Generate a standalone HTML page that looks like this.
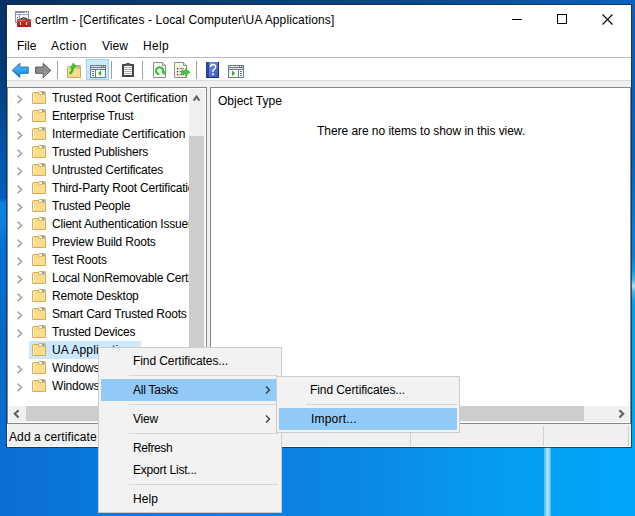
<!DOCTYPE html>
<html><head><meta charset="utf-8">
<style>
*{margin:0;padding:0;box-sizing:border-box}
html,body{width:635px;height:516px;overflow:hidden}
body{position:relative;font-family:"Liberation Sans",sans-serif;font-size:12px;color:#000;background:#0a6cd0}
.a{position:absolute}
.t{position:absolute;white-space:pre;line-height:14px;height:14px}
#desk{left:0;top:0;width:635px;height:516px;background:#0a6ed2}
#dtop{left:0;top:0;width:635px;height:6px;background:linear-gradient(90deg,#0a3062 0px,#083a70 160px,#08447f 320px,#0a4f98 475px,#0a62c0 635px)}
#dleft{left:0;top:0;width:8px;height:450px;background:linear-gradient(180deg,#0a3062 0px,#003a78 67px,#0058b0 157px,#005eba 198px,#0a84e2 203px,#0a80de 225px,#0070d2 245px,#006ed0 290px,#0068c8 337px,#0a6ed2 450px)}
#dright{left:630px;top:0;width:5px;height:450px;background:linear-gradient(180deg,#0a60c0 0px,#0062c0 67px,#0066c8 157px,#0080e6 237px,#0a7ed8 255px,#069cf0 270px,#40b8f4 280px,#a8e0f8 286px,#40b8f4 292px,#00a0f4 302px,#00a4f8 337px,#00a6fa 450px)}
#dbot{left:0;top:445px;width:635px;height:71px;background:linear-gradient(90deg,#0a6ed2 0px,#0a78dc 95px,#0a82e2 285px,#0a8ae8 380px,#0896ee 450px,#04a0f4 540px,#00a6fa 635px)}
#beam{left:544px;top:440px;width:7px;height:76px;background:linear-gradient(90deg,rgba(110,205,255,.55),rgba(200,240,255,.95) 55%,rgba(110,205,255,.5))}
#win{left:6px;top:4px;width:626px;height:444px;border:1px solid rgba(40,40,40,.75);background:#fff;background-clip:padding-box}
.row{position:absolute;left:-1px;width:190px;height:18px;overflow:hidden}
.row .tx{position:absolute;left:45px;top:0;line-height:18px;white-space:pre;letter-spacing:-0.2px}
.row .chev{position:absolute;left:9px;top:5px}
.row .fold{position:absolute;left:25px;top:2px}
.sep{position:absolute;height:1px;background:#d7d7d7}
.mi{position:absolute;white-space:pre;line-height:22px;height:22px;letter-spacing:-0.22px}
.row .hl{position:absolute;left:22px;top:0;width:112px;height:18px;background:#cce8ff}
</style></head><body>
<div class="a" id="desk"></div><div class="a" id="dtop"></div><div class="a" id="dleft"></div><div class="a" id="dright"></div><div class="a" id="dbot"></div><div class="a" id="beam"></div>
<div class="a" id="win"></div>

<!-- title icon -->
<svg class="a" style="left:15px;top:11px" width="16" height="16" viewBox="0 0 16 16">
<defs><linearGradient id="rb" x1="0" y1="0" x2="0" y2="1"><stop offset="0" stop-color="#e23434"/><stop offset="1" stop-color="#b81818"/></linearGradient></defs>
<rect x="0.5" y="0.5" width="13" height="11" fill="#fafbfc" stroke="#8a94a4"/>
<rect x="1" y="1" width="9" height="1" fill="#7d8aa6"/><rect x="11" y="1" width="1" height="1" fill="#7d8aa6"/><rect x="13" y="1" width="0" height="1" fill="#7d8aa6"/>
<rect x="1" y="3" width="12" height="1" fill="#9ba6b8"/>
<rect x="4" y="4" width="1" height="7" fill="#8a94a4"/>
<rect x="2" y="6" width="1" height="1" fill="#555"/>
<path d="M5.5 8.5Q8.8 5.2 12.3 8.5" fill="none" stroke="#1e1e1e" stroke-width="1.2"/>
<rect x="2" y="8" width="14" height="8" rx="0.8" fill="url(#rb)"/>
<rect x="3" y="9" width="7" height="1" fill="#ee7070"/>
<rect x="5" y="11" width="1" height="3" fill="#d6e2e2"/><rect x="11" y="11" width="1" height="3" fill="#d6e2e2"/>
</svg>
<div class="t" style="left:35px;top:13px;letter-spacing:0.13px">certlm - [Certificates - Local Computer\UA Applications]</div>

<!-- caption buttons -->
<div class="a" style="left:512px;top:19px;width:10px;height:1px;background:#000"></div>
<div class="a" style="left:557px;top:14px;width:10px;height:10px;border:1px solid #000"></div>
<svg class="a" style="left:602px;top:14px" width="11" height="11" viewBox="0 0 11 11"><path d="M0.5 0.5L10.5 10.5M10.5 0.5L0.5 10.5" stroke="#000" stroke-width="1.1"/></svg>

<!-- menu bar -->
<div class="t" style="left:17px;top:39px">File</div>
<div class="t" style="left:51px;top:39px;letter-spacing:0.4px">Action</div>
<div class="t" style="left:102px;top:39px">View</div>
<div class="t" style="left:143px;top:39px;letter-spacing:0.3px">Help</div>
<div class="a" style="left:7px;top:57px;width:624px;height:1px;background:#bdbdbd"></div>

<!-- toolbar -->
<div class="a" style="left:7px;top:80px;width:624px;height:1px;background:#dadada"></div>
<div class="a" style="left:7px;top:81px;width:624px;height:6px;background:#f0f0f0"></div>

<!-- toolbar icons -->
<svg class="a" style="left:10px;top:61px" width="20" height="19" viewBox="0 0 20 19">
<defs><linearGradient id="gb" x1="0" y1="0" x2="0" y2="1"><stop offset="0" stop-color="#5cc8fa"/><stop offset="1" stop-color="#0a7ad6"/></linearGradient></defs>
<path d="M2.2 9.4L9.8 2.3V6.1H18.2V12.3H9.8V16.5Z" fill="url(#gb)" stroke="#1a72c8" stroke-width="1"/>
</svg>
<svg class="a" style="left:33px;top:61px" width="20" height="19" viewBox="0 0 20 19">
<defs><linearGradient id="gg" x1="0" y1="0" x2="0" y2="1"><stop offset="0" stop-color="#9a9a9a"/><stop offset=".5" stop-color="#8a8a8a"/><stop offset="1" stop-color="#b4b4b4"/></linearGradient></defs>
<path d="M17.8 9.4L10.2 2.3V6.1H2.6V12.3H10.2V16.5Z" fill="url(#gg)" stroke="#555" stroke-width="1"/>
</svg>
<div class="a" style="left:57px;top:61px;width:1px;height:18px;background:#a0a0a0"></div>
<svg class="a" style="left:66px;top:62px" width="16" height="16" viewBox="0 0 16 16">
<path d="M1.5 15.5V5.5Q1.5 4.5 2.5 4.5H7.5L9 6.5H14.5V15.5Z" fill="#f9dc8c" stroke="#d0a858"/>
<path d="M8 6.5V4Q8 3.5 9 3.5H13.5Q14.5 3.5 14.5 4.5V6.5" fill="#f3d27c" stroke="#d0a858"/>
<rect x="9" y="4.2" width="3" height="1.3" fill="#fff"/><rect x="11.5" y="4.2" width="2" height="1.3" fill="#3b8de0"/>
<path d="M3.6 11.8Q6.4 10 6.9 6" fill="none" stroke="#2fbf2f" stroke-width="2.3"/>
<path d="M4.2 6.4L7.2 0.9L10.8 4.8Z" fill="#3ccc3c" stroke="#22a022" stroke-width="0.5"/>
</svg>
<div class="a" style="left:86px;top:59px;width:23px;height:21px;background:#cce8ff;border:1px solid #99d1ff"></div>
<svg class="a" style="left:90px;top:65px" width="16" height="13" viewBox="0 0 16 13">
<rect x="0" y="0" width="16" height="13" fill="#737b86"/>
<rect x="1" y="1" width="10" height="1" fill="#dde0e4"/><rect x="12" y="1" width="1" height="1" fill="#dde0e4"/><rect x="14" y="1" width="1" height="1" fill="#dde0e4"/>
<rect x="1" y="3" width="14" height="1" fill="#dde0e4"/>
<rect x="1" y="5" width="4" height="7" fill="#fff"/><rect x="6" y="5" width="9" height="7" fill="#f8f8f8"/>
<rect x="2" y="6" width="2" height="1" fill="#3a78c8"/><rect x="2" y="8" width="2" height="1" fill="#3a78c8"/><rect x="2" y="10" width="2" height="1" fill="#3a78c8"/>
<path d="M8 8.3L11 5.6V11Z" fill="#2fb52f"/>
</svg>
<div class="a" style="left:111px;top:61px;width:1px;height:18px;background:#a0a0a0"></div>
<svg class="a" style="left:122px;top:63px" width="12" height="14" viewBox="0 0 12 14">
<rect x="0" y="1" width="12" height="13" fill="#474747"/>
<rect x="2" y="3" width="8" height="9" fill="#fff"/>
<rect x="4" y="0" width="4" height="2" fill="#555"/>
<rect x="3" y="2" width="6" height="1" fill="#555"/>
<rect x="2" y="4" width="8" height="1" fill="#b0b0b0"/><rect x="2" y="6" width="8" height="1" fill="#b0b0b0"/><rect x="2" y="8" width="8" height="1" fill="#b0b0b0"/><rect x="2" y="10" width="8" height="1" fill="#b0b0b0"/>
</svg>
<div class="a" style="left:142px;top:61px;width:1px;height:18px;background:#a0a0a0"></div>
<svg class="a" style="left:153px;top:62px" width="14" height="16" viewBox="0 0 14 16">
<path d="M0.5 0.5H9.5L12.5 3.5V15.5H0.5Z" fill="#fafafa" stroke="#8e8e8e"/>
<path d="M9.5 0.5V3.5H12.5" fill="#e0e0e0" stroke="#8e8e8e"/>
<path d="M6.2 12.4A3.6 3.6 0 1 1 9.9 10.4" fill="none" stroke="#2fc02f" stroke-width="2.1"/><path d="M8.2 9.6L12.4 9.2L11.2 13.4Z" fill="#2fc02f"/>
</svg>
<svg class="a" style="left:174px;top:62px" width="17" height="16" viewBox="0 0 17 16">
<path d="M0.5 0.5H9.5L12.5 3.5V15.5H0.5Z" fill="#fdf6df" stroke="#8e8e8e"/>
<path d="M9.5 0.5V3.5H12.5" fill="#e0e0e0" stroke="#8e8e8e"/>
<rect x="3" y="6" width="1.3" height="1.3" fill="#333"/><rect x="3" y="9" width="1.3" height="1.3" fill="#333"/><rect x="3" y="12" width="1.3" height="1.3" fill="#333"/>
<rect x="5.5" y="6.2" width="4.5" height="1" fill="#6a6a9a"/><rect x="5.5" y="9.2" width="4.5" height="1" fill="#6a6a9a"/><rect x="5.5" y="12.2" width="4.5" height="1" fill="#6a6a9a"/>
<path d="M7.5 8.6H11.5V6.5L16 10.3L11.5 14.1V12H7.5Z" fill="#44c844" stroke="#2ea82e" stroke-width="0.6"/>
</svg>
<div class="a" style="left:196px;top:61px;width:1px;height:18px;background:#a0a0a0"></div>
<svg class="a" style="left:206px;top:62px" width="13" height="16" viewBox="0 0 13 16">
<defs><linearGradient id="hb" x1="0" y1="0" x2="1" y2="1"><stop offset="0" stop-color="#7896ea"/><stop offset="1" stop-color="#3654c0"/></linearGradient></defs>
<rect x="0" y="0" width="13" height="16" fill="url(#hb)"/>
<rect x="0" y="0" width="3" height="16" fill="#2a46a8"/>
<rect x="12" y="0" width="1" height="16" fill="#1a3080"/><rect x="0" y="15" width="13" height="1" fill="#1a3080"/>
<path d="M4.6 5Q4.6 2.6 7 2.6Q9.6 2.6 9.6 5Q9.6 6.6 7.8 7.6Q7 8.1 7 10" fill="none" stroke="#fff" stroke-width="1.5"/>
<rect x="6.1" y="11.3" width="1.8" height="1.8" fill="#fff"/>
</svg>
<svg class="a" style="left:228px;top:65px" width="16" height="13" viewBox="0 0 16 13">
<rect x="0" y="0" width="16" height="13" fill="#737b86"/>
<rect x="1" y="1" width="10" height="1" fill="#dde0e4"/><rect x="12" y="1" width="1" height="1" fill="#dde0e4"/><rect x="14" y="1" width="1" height="1" fill="#dde0e4"/>
<rect x="1" y="3" width="14" height="1" fill="#dde0e4"/>
<rect x="1" y="5" width="9" height="7" fill="#f8f8f8"/><rect x="11" y="5" width="4" height="7" fill="#fff"/>
<rect x="12" y="6" width="2" height="1" fill="#3a78c8"/><rect x="12" y="8" width="2" height="1" fill="#3a78c8"/><rect x="12" y="10" width="2" height="1" fill="#3a78c8"/>
<path d="M4 5.6L7.2 8.3L4 11Z" fill="#2fb52f"/>
</svg>
<!-- panes -->
<div class="a" style="left:7px;top:87px;width:200px;height:337px;border:1px solid #828790;border-right:1px solid #828790;background:#fff"></div>
<div class="a" style="left:207px;top:87px;width:3px;height:337px;background:#f0f0f0"></div>
<div class="a" style="left:210px;top:87px;width:421px;height:337px;border:1px solid #828790;background:#fff"></div>

<!-- status bar -->
<div class="a" style="left:7px;top:424px;width:624px;height:23px;background:#f0f0f0;border-left:1px solid #fff;border-bottom:1px solid #fff"></div>
<div class="t" style="left:9px;top:430px;letter-spacing:0.1px">Add a certificate</div>
<div class="a" style="left:410px;top:426px;width:1px;height:20px;background:#d0d0d0"></div>
<div class="a" style="left:543px;top:426px;width:1px;height:20px;background:#d0d0d0"></div>
<div class="a" style="left:628px;top:426px;width:1px;height:20px;background:#d0d0d0"></div>


<!-- tree -->
<div class="a" style="left:8px;top:88px;width:181px;height:318px;overflow:hidden">
<div class="row" style="top:1px"><svg class="chev" width="8" height="11" viewBox="0 0 8 11"><path d="M1.6 1.6L5.6 5.4L1.6 9.2" fill="none" stroke="#a6a6a6" stroke-width="1.6"/></svg><svg class="fold" width="14" height="13" viewBox="0 0 14 13"><path d="M0.5 12.5V2.5Q0.5 1.5 1.5 1.5H6L7.5 3.5H13.5V12.5Z" fill="#f9dc8c" stroke="#d4ae5c"/>
<path d="M6.5 3.5V1.5Q6.5 0.5 7.5 0.5H12.5Q13.5 0.5 13.5 1.5V3.5" fill="#f3d27c" stroke="#d4ae5c"/>
<rect x="7.3" y="1.2" width="3" height="1.5" fill="#fff"/><rect x="10" y="1.2" width="2.3" height="1.5" fill="#4a90e2"/>
<path d="M1.5 12V3" stroke="#fff3c8" stroke-width="1"/></svg><span class="tx" style="letter-spacing:0">Trusted Root Certification</span></div>
<div class="row" style="top:19px"><svg class="chev" width="8" height="11" viewBox="0 0 8 11"><path d="M1.6 1.6L5.6 5.4L1.6 9.2" fill="none" stroke="#a6a6a6" stroke-width="1.6"/></svg><svg class="fold" width="14" height="13" viewBox="0 0 14 13"><path d="M0.5 12.5V2.5Q0.5 1.5 1.5 1.5H6L7.5 3.5H13.5V12.5Z" fill="#f9dc8c" stroke="#d4ae5c"/>
<path d="M6.5 3.5V1.5Q6.5 0.5 7.5 0.5H12.5Q13.5 0.5 13.5 1.5V3.5" fill="#f3d27c" stroke="#d4ae5c"/>
<rect x="7.3" y="1.2" width="3" height="1.5" fill="#fff"/><rect x="10" y="1.2" width="2.3" height="1.5" fill="#4a90e2"/>
<path d="M1.5 12V3" stroke="#fff3c8" stroke-width="1"/></svg><span class="tx">Enterprise Trust</span></div>
<div class="row" style="top:37px"><svg class="chev" width="8" height="11" viewBox="0 0 8 11"><path d="M1.6 1.6L5.6 5.4L1.6 9.2" fill="none" stroke="#a6a6a6" stroke-width="1.6"/></svg><svg class="fold" width="14" height="13" viewBox="0 0 14 13"><path d="M0.5 12.5V2.5Q0.5 1.5 1.5 1.5H6L7.5 3.5H13.5V12.5Z" fill="#f9dc8c" stroke="#d4ae5c"/>
<path d="M6.5 3.5V1.5Q6.5 0.5 7.5 0.5H12.5Q13.5 0.5 13.5 1.5V3.5" fill="#f3d27c" stroke="#d4ae5c"/>
<rect x="7.3" y="1.2" width="3" height="1.5" fill="#fff"/><rect x="10" y="1.2" width="2.3" height="1.5" fill="#4a90e2"/>
<path d="M1.5 12V3" stroke="#fff3c8" stroke-width="1"/></svg><span class="tx" style="letter-spacing:0">Intermediate Certification</span></div>
<div class="row" style="top:55px"><svg class="chev" width="8" height="11" viewBox="0 0 8 11"><path d="M1.6 1.6L5.6 5.4L1.6 9.2" fill="none" stroke="#a6a6a6" stroke-width="1.6"/></svg><svg class="fold" width="14" height="13" viewBox="0 0 14 13"><path d="M0.5 12.5V2.5Q0.5 1.5 1.5 1.5H6L7.5 3.5H13.5V12.5Z" fill="#f9dc8c" stroke="#d4ae5c"/>
<path d="M6.5 3.5V1.5Q6.5 0.5 7.5 0.5H12.5Q13.5 0.5 13.5 1.5V3.5" fill="#f3d27c" stroke="#d4ae5c"/>
<rect x="7.3" y="1.2" width="3" height="1.5" fill="#fff"/><rect x="10" y="1.2" width="2.3" height="1.5" fill="#4a90e2"/>
<path d="M1.5 12V3" stroke="#fff3c8" stroke-width="1"/></svg><span class="tx">Trusted Publishers</span></div>
<div class="row" style="top:73px"><svg class="chev" width="8" height="11" viewBox="0 0 8 11"><path d="M1.6 1.6L5.6 5.4L1.6 9.2" fill="none" stroke="#a6a6a6" stroke-width="1.6"/></svg><svg class="fold" width="14" height="13" viewBox="0 0 14 13"><path d="M0.5 12.5V2.5Q0.5 1.5 1.5 1.5H6L7.5 3.5H13.5V12.5Z" fill="#f9dc8c" stroke="#d4ae5c"/>
<path d="M6.5 3.5V1.5Q6.5 0.5 7.5 0.5H12.5Q13.5 0.5 13.5 1.5V3.5" fill="#f3d27c" stroke="#d4ae5c"/>
<rect x="7.3" y="1.2" width="3" height="1.5" fill="#fff"/><rect x="10" y="1.2" width="2.3" height="1.5" fill="#4a90e2"/>
<path d="M1.5 12V3" stroke="#fff3c8" stroke-width="1"/></svg><span class="tx">Untrusted Certificates</span></div>
<div class="row" style="top:91px"><svg class="chev" width="8" height="11" viewBox="0 0 8 11"><path d="M1.6 1.6L5.6 5.4L1.6 9.2" fill="none" stroke="#a6a6a6" stroke-width="1.6"/></svg><svg class="fold" width="14" height="13" viewBox="0 0 14 13"><path d="M0.5 12.5V2.5Q0.5 1.5 1.5 1.5H6L7.5 3.5H13.5V12.5Z" fill="#f9dc8c" stroke="#d4ae5c"/>
<path d="M6.5 3.5V1.5Q6.5 0.5 7.5 0.5H12.5Q13.5 0.5 13.5 1.5V3.5" fill="#f3d27c" stroke="#d4ae5c"/>
<rect x="7.3" y="1.2" width="3" height="1.5" fill="#fff"/><rect x="10" y="1.2" width="2.3" height="1.5" fill="#4a90e2"/>
<path d="M1.5 12V3" stroke="#fff3c8" stroke-width="1"/></svg><span class="tx">Third-Party Root Certification Authorities</span></div>
<div class="row" style="top:109px"><svg class="chev" width="8" height="11" viewBox="0 0 8 11"><path d="M1.6 1.6L5.6 5.4L1.6 9.2" fill="none" stroke="#a6a6a6" stroke-width="1.6"/></svg><svg class="fold" width="14" height="13" viewBox="0 0 14 13"><path d="M0.5 12.5V2.5Q0.5 1.5 1.5 1.5H6L7.5 3.5H13.5V12.5Z" fill="#f9dc8c" stroke="#d4ae5c"/>
<path d="M6.5 3.5V1.5Q6.5 0.5 7.5 0.5H12.5Q13.5 0.5 13.5 1.5V3.5" fill="#f3d27c" stroke="#d4ae5c"/>
<rect x="7.3" y="1.2" width="3" height="1.5" fill="#fff"/><rect x="10" y="1.2" width="2.3" height="1.5" fill="#4a90e2"/>
<path d="M1.5 12V3" stroke="#fff3c8" stroke-width="1"/></svg><span class="tx">Trusted People</span></div>
<div class="row" style="top:127px"><svg class="chev" width="8" height="11" viewBox="0 0 8 11"><path d="M1.6 1.6L5.6 5.4L1.6 9.2" fill="none" stroke="#a6a6a6" stroke-width="1.6"/></svg><svg class="fold" width="14" height="13" viewBox="0 0 14 13"><path d="M0.5 12.5V2.5Q0.5 1.5 1.5 1.5H6L7.5 3.5H13.5V12.5Z" fill="#f9dc8c" stroke="#d4ae5c"/>
<path d="M6.5 3.5V1.5Q6.5 0.5 7.5 0.5H12.5Q13.5 0.5 13.5 1.5V3.5" fill="#f3d27c" stroke="#d4ae5c"/>
<rect x="7.3" y="1.2" width="3" height="1.5" fill="#fff"/><rect x="10" y="1.2" width="2.3" height="1.5" fill="#4a90e2"/>
<path d="M1.5 12V3" stroke="#fff3c8" stroke-width="1"/></svg><span class="tx">Client Authentication Issuers</span></div>
<div class="row" style="top:145px"><svg class="chev" width="8" height="11" viewBox="0 0 8 11"><path d="M1.6 1.6L5.6 5.4L1.6 9.2" fill="none" stroke="#a6a6a6" stroke-width="1.6"/></svg><svg class="fold" width="14" height="13" viewBox="0 0 14 13"><path d="M0.5 12.5V2.5Q0.5 1.5 1.5 1.5H6L7.5 3.5H13.5V12.5Z" fill="#f9dc8c" stroke="#d4ae5c"/>
<path d="M6.5 3.5V1.5Q6.5 0.5 7.5 0.5H12.5Q13.5 0.5 13.5 1.5V3.5" fill="#f3d27c" stroke="#d4ae5c"/>
<rect x="7.3" y="1.2" width="3" height="1.5" fill="#fff"/><rect x="10" y="1.2" width="2.3" height="1.5" fill="#4a90e2"/>
<path d="M1.5 12V3" stroke="#fff3c8" stroke-width="1"/></svg><span class="tx">Preview Build Roots</span></div>
<div class="row" style="top:163px"><svg class="chev" width="8" height="11" viewBox="0 0 8 11"><path d="M1.6 1.6L5.6 5.4L1.6 9.2" fill="none" stroke="#a6a6a6" stroke-width="1.6"/></svg><svg class="fold" width="14" height="13" viewBox="0 0 14 13"><path d="M0.5 12.5V2.5Q0.5 1.5 1.5 1.5H6L7.5 3.5H13.5V12.5Z" fill="#f9dc8c" stroke="#d4ae5c"/>
<path d="M6.5 3.5V1.5Q6.5 0.5 7.5 0.5H12.5Q13.5 0.5 13.5 1.5V3.5" fill="#f3d27c" stroke="#d4ae5c"/>
<rect x="7.3" y="1.2" width="3" height="1.5" fill="#fff"/><rect x="10" y="1.2" width="2.3" height="1.5" fill="#4a90e2"/>
<path d="M1.5 12V3" stroke="#fff3c8" stroke-width="1"/></svg><span class="tx">Test Roots</span></div>
<div class="row" style="top:181px"><svg class="chev" width="8" height="11" viewBox="0 0 8 11"><path d="M1.6 1.6L5.6 5.4L1.6 9.2" fill="none" stroke="#a6a6a6" stroke-width="1.6"/></svg><svg class="fold" width="14" height="13" viewBox="0 0 14 13"><path d="M0.5 12.5V2.5Q0.5 1.5 1.5 1.5H6L7.5 3.5H13.5V12.5Z" fill="#f9dc8c" stroke="#d4ae5c"/>
<path d="M6.5 3.5V1.5Q6.5 0.5 7.5 0.5H12.5Q13.5 0.5 13.5 1.5V3.5" fill="#f3d27c" stroke="#d4ae5c"/>
<rect x="7.3" y="1.2" width="3" height="1.5" fill="#fff"/><rect x="10" y="1.2" width="2.3" height="1.5" fill="#4a90e2"/>
<path d="M1.5 12V3" stroke="#fff3c8" stroke-width="1"/></svg><span class="tx">Local NonRemovable Certificates</span></div>
<div class="row" style="top:199px"><svg class="chev" width="8" height="11" viewBox="0 0 8 11"><path d="M1.6 1.6L5.6 5.4L1.6 9.2" fill="none" stroke="#a6a6a6" stroke-width="1.6"/></svg><svg class="fold" width="14" height="13" viewBox="0 0 14 13"><path d="M0.5 12.5V2.5Q0.5 1.5 1.5 1.5H6L7.5 3.5H13.5V12.5Z" fill="#f9dc8c" stroke="#d4ae5c"/>
<path d="M6.5 3.5V1.5Q6.5 0.5 7.5 0.5H12.5Q13.5 0.5 13.5 1.5V3.5" fill="#f3d27c" stroke="#d4ae5c"/>
<rect x="7.3" y="1.2" width="3" height="1.5" fill="#fff"/><rect x="10" y="1.2" width="2.3" height="1.5" fill="#4a90e2"/>
<path d="M1.5 12V3" stroke="#fff3c8" stroke-width="1"/></svg><span class="tx">Remote Desktop</span></div>
<div class="row" style="top:217px"><svg class="chev" width="8" height="11" viewBox="0 0 8 11"><path d="M1.6 1.6L5.6 5.4L1.6 9.2" fill="none" stroke="#a6a6a6" stroke-width="1.6"/></svg><svg class="fold" width="14" height="13" viewBox="0 0 14 13"><path d="M0.5 12.5V2.5Q0.5 1.5 1.5 1.5H6L7.5 3.5H13.5V12.5Z" fill="#f9dc8c" stroke="#d4ae5c"/>
<path d="M6.5 3.5V1.5Q6.5 0.5 7.5 0.5H12.5Q13.5 0.5 13.5 1.5V3.5" fill="#f3d27c" stroke="#d4ae5c"/>
<rect x="7.3" y="1.2" width="3" height="1.5" fill="#fff"/><rect x="10" y="1.2" width="2.3" height="1.5" fill="#4a90e2"/>
<path d="M1.5 12V3" stroke="#fff3c8" stroke-width="1"/></svg><span class="tx">Smart Card Trusted Roots</span></div>
<div class="row" style="top:235px"><svg class="chev" width="8" height="11" viewBox="0 0 8 11"><path d="M1.6 1.6L5.6 5.4L1.6 9.2" fill="none" stroke="#a6a6a6" stroke-width="1.6"/></svg><svg class="fold" width="14" height="13" viewBox="0 0 14 13"><path d="M0.5 12.5V2.5Q0.5 1.5 1.5 1.5H6L7.5 3.5H13.5V12.5Z" fill="#f9dc8c" stroke="#d4ae5c"/>
<path d="M6.5 3.5V1.5Q6.5 0.5 7.5 0.5H12.5Q13.5 0.5 13.5 1.5V3.5" fill="#f3d27c" stroke="#d4ae5c"/>
<rect x="7.3" y="1.2" width="3" height="1.5" fill="#fff"/><rect x="10" y="1.2" width="2.3" height="1.5" fill="#4a90e2"/>
<path d="M1.5 12V3" stroke="#fff3c8" stroke-width="1"/></svg><span class="tx">Trusted Devices</span></div>
<div class="row" style="top:253px"><div class="hl"></div><svg class="fold" width="14" height="13" viewBox="0 0 14 13"><path d="M0.5 12.5V2.5Q0.5 1.5 1.5 1.5H6L7.5 3.5H13.5V12.5Z" fill="#f9dc8c" stroke="#d4ae5c"/>
<path d="M6.5 3.5V1.5Q6.5 0.5 7.5 0.5H12.5Q13.5 0.5 13.5 1.5V3.5" fill="#f3d27c" stroke="#d4ae5c"/>
<rect x="7.3" y="1.2" width="3" height="1.5" fill="#fff"/><rect x="10" y="1.2" width="2.3" height="1.5" fill="#4a90e2"/>
<path d="M1.5 12V3" stroke="#fff3c8" stroke-width="1"/></svg><span class="tx" style="letter-spacing:0.2px">UA Applications</span></div>
<div class="row" style="top:271px"><svg class="chev" width="8" height="11" viewBox="0 0 8 11"><path d="M1.6 1.6L5.6 5.4L1.6 9.2" fill="none" stroke="#a6a6a6" stroke-width="1.6"/></svg><svg class="fold" width="14" height="13" viewBox="0 0 14 13"><path d="M0.5 12.5V2.5Q0.5 1.5 1.5 1.5H6L7.5 3.5H13.5V12.5Z" fill="#f9dc8c" stroke="#d4ae5c"/>
<path d="M6.5 3.5V1.5Q6.5 0.5 7.5 0.5H12.5Q13.5 0.5 13.5 1.5V3.5" fill="#f3d27c" stroke="#d4ae5c"/>
<rect x="7.3" y="1.2" width="3" height="1.5" fill="#fff"/><rect x="10" y="1.2" width="2.3" height="1.5" fill="#4a90e2"/>
<path d="M1.5 12V3" stroke="#fff3c8" stroke-width="1"/></svg><span class="tx">Windows Live ID Token Issuer</span></div>
<div class="row" style="top:289px"><svg class="chev" width="8" height="11" viewBox="0 0 8 11"><path d="M1.6 1.6L5.6 5.4L1.6 9.2" fill="none" stroke="#a6a6a6" stroke-width="1.6"/></svg><svg class="fold" width="14" height="13" viewBox="0 0 14 13"><path d="M0.5 12.5V2.5Q0.5 1.5 1.5 1.5H6L7.5 3.5H13.5V12.5Z" fill="#f9dc8c" stroke="#d4ae5c"/>
<path d="M6.5 3.5V1.5Q6.5 0.5 7.5 0.5H12.5Q13.5 0.5 13.5 1.5V3.5" fill="#f3d27c" stroke="#d4ae5c"/>
<rect x="7.3" y="1.2" width="3" height="1.5" fill="#fff"/><rect x="10" y="1.2" width="2.3" height="1.5" fill="#4a90e2"/>
<path d="M1.5 12V3" stroke="#fff3c8" stroke-width="1"/></svg><span class="tx">Windows Store</span></div>
</div>
<!-- scrollbars -->
<div class="a" style="left:189px;top:89px;width:16px;height:317px;background:#f0f0f0"></div>
<svg class="a" style="left:192px;top:94px" width="10" height="8" viewBox="0 0 10 8"><path d="M1.7 6.6L4.5 2.5L7.3 6.6" fill="none" stroke="#606060" stroke-width="2"/></svg>
<div class="a" style="left:189px;top:136px;width:15px;height:240px;background:#cdcdcd"></div>
<div class="a" style="left:9px;top:406px;width:180px;height:16px;background:#f0f0f0"></div>
<div class="a" style="left:189px;top:406px;width:16px;height:16px;background:#f0f0f0"></div>
<svg class="a" style="left:12px;top:409px" width="10" height="10" viewBox="0 0 10 10"><path d="M6.6 1.2L2.8 4.8L6.6 8.4" fill="none" stroke="#606060" stroke-width="2.1"/></svg>
<div class="a" style="left:26px;top:406px;width:120px;height:15px;background:#cdcdcd"></div>
<div class="a" style="left:212px;top:406px;width:417px;height:16px;background:#f0f0f0"></div>
<div class="a" style="left:229px;top:406px;width:355px;height:15px;background:#cdcdcd"></div>
<svg class="a" style="left:616px;top:409px" width="10" height="10" viewBox="0 0 10 10"><path d="M3.4 1.2L7.2 4.8L3.4 8.4" fill="none" stroke="#606060" stroke-width="2.1"/></svg>
<!-- right pane content -->
<div class="t" style="left:218px;top:94px">Object Type</div>
<div class="t" style="left:317px;top:124px;letter-spacing:-0.05px">There are no items to show in this view.</div>

<!-- context menu -->
<div class="a" style="left:98px;top:347px;width:184px;height:166px;background:#f2f2f2;border:1px solid #cccccc"></div>
<div class="a" style="left:101px;top:379px;width:176px;height:22px;background:#91c9f7"></div>
<div class="mi" style="left:133px;top:350px;letter-spacing:-0.08px">Find Certificates...</div>
<div class="sep" style="left:129px;top:375px;width:149px"></div>
<div class="mi" style="left:133px;top:379px">All Tasks</div>
<svg class="a" style="left:264px;top:385px" width="8" height="10" viewBox="0 0 8 10"><path d="M2 1.5L5.5 5L2 8.5" fill="none" stroke="#333" stroke-width="1.2"/></svg>
<div class="sep" style="left:129px;top:404px;width:149px"></div>
<div class="mi" style="left:133px;top:408px">View</div>
<svg class="a" style="left:264px;top:414px" width="8" height="10" viewBox="0 0 8 10"><path d="M2 1.5L5.5 5L2 8.5" fill="none" stroke="#333" stroke-width="1.2"/></svg>
<div class="sep" style="left:129px;top:433px;width:149px"></div>
<div class="mi" style="left:133px;top:437px;letter-spacing:-0.4px">Refresh</div>
<div class="mi" style="left:133px;top:459px">Export List...</div>
<div class="sep" style="left:129px;top:484px;width:149px"></div>
<div class="mi" style="left:133px;top:488px;letter-spacing:0.1px">Help</div>
<!-- submenu -->
<div class="a" style="left:276px;top:376px;width:184px;height:57px;background:#f2f2f2;border:1px solid #cccccc"></div>
<div class="mi" style="left:310px;top:379px;letter-spacing:-0.08px">Find Certificates...</div>
<div class="sep" style="left:306px;top:404px;width:151px"></div>
<div class="a" style="left:279px;top:408px;width:178px;height:22px;background:#91c9f7"></div>
<div class="mi" style="left:311px;top:408px;letter-spacing:0.2px">Import...</div>
</body></html>
